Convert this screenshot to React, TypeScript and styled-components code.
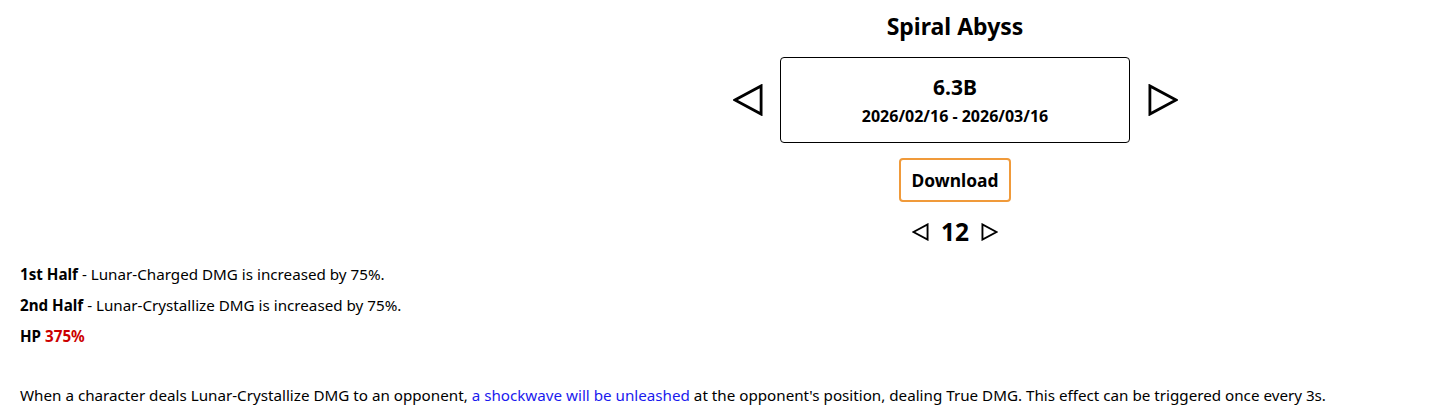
import React from "react";
import styled, { createGlobalStyle } from "styled-components";

const Global = createGlobalStyle`
  body {
    margin: 8px;
    font-family: "Noto Sans", "Open Sans", sans-serif;
    color: #000;
    background: #fff;
  }
`;

const Page = styled.div`
  display: flex;
  flex-direction: column;
`;

const Header = styled.header`
  display: flex;
  justify-content: center;
  padding-left: 474px;
`;

const Column = styled.div`
  display: flex;
  flex-direction: column;
  align-items: center;
`;

const Title = styled.h1`
  margin: 2px 0 0;
  font-size: 23px;
  font-weight: 700;
  line-height: 32px;
`;

const PeriodRow = styled.div`
  display: flex;
  align-items: center;
  gap: 17px;
  margin-top: 15px;
`;

const ArrowButton = styled.button<{ $size: number }>`
  display: flex;
  align-items: center;
  justify-content: center;
  width: ${(p) => p.$size}px;
  height: ${(p) => p.$size}px;
  padding: 0;
  border: none;
  background: none;
  cursor: pointer;
`;

const PeriodBox = styled.div`
  width: 348px;
  height: 84px;
  border: 1px solid #000;
  border-radius: 4px;
  display: flex;
  flex-direction: column;
  align-items: center;
  justify-content: center;
  gap: 6px;
`;

const Version = styled.div`
  font-size: 21px;
  font-weight: 700;
  line-height: 26px;
`;

const Dates = styled.div`
  font-size: 16px;
  font-weight: 700;
  line-height: 20px;
`;

const DownloadButton = styled.button`
  margin-top: 15px;
  height: 44px;
  padding: 0 11px;
  border: 2px solid #f09a3a;
  border-radius: 4px;
  background: #fff;
  font-family: inherit;
  font-size: 17.4px;
  font-weight: 700;
  color: #000;
  cursor: pointer;
`;

const FloorRow = styled.div`
  display: flex;
  align-items: center;
  gap: 12px;
  margin-top: 15px;
`;

const FloorNumber = styled.span`
  font-size: 24.5px;
  font-weight: 700;
  line-height: 30px;
`;

const Details = styled.section`
  padding: 16px 12px 0;
  font-size: 15.2px;
`;

const Line = styled.p`
  margin: 0 0 9px;
  line-height: 22px;
`;

const Strong = styled.b`
  font-weight: 700;
`;

const Red = styled.span`
  color: #cc0000;
  font-weight: 700;
`;

const Effect = styled.p`
  margin: 37px 0 0;
  line-height: 22px;
`;

const Link = styled.span`
  color: #1a1aee;
`;

function Triangle({ dir, w, h, stroke }: { dir: "left" | "right"; w: number; h: number; stroke: number }) {
  const pad = stroke / 2 + 0.5;
  const pts =
    dir === "left"
      ? `${pad},${h / 2} ${w - pad},${pad} ${w - pad},${h - pad}`
      : `${w - pad},${h / 2} ${pad},${pad} ${pad},${h - pad}`;
  return (
    <svg width={w} height={h} viewBox={`0 0 ${w} ${h}`}>
      <polygon points={pts} fill="none" stroke="#000" strokeWidth={stroke} strokeLinejoin="miter" />
    </svg>
  );
}

export default function App() {
  return (
    <Page>
      <Global />
      <Header>
        <Column>
          <Title>Spiral Abyss</Title>
          <PeriodRow>
            <ArrowButton $size={31}>
              <Triangle dir="left" w={30} h={32} stroke={2.8} />
            </ArrowButton>
            <PeriodBox>
              <Version>6.3B</Version>
              <Dates>2026/02/16 - 2026/03/16</Dates>
            </PeriodBox>
            <ArrowButton $size={31}>
              <Triangle dir="right" w={30} h={32} stroke={2.8} />
            </ArrowButton>
          </PeriodRow>
          <DownloadButton>Download</DownloadButton>
          <FloorRow>
            <ArrowButton $size={17}>
              <Triangle dir="left" w={17} h={18} stroke={1.9} />
            </ArrowButton>
            <FloorNumber>12</FloorNumber>
            <ArrowButton $size={17}>
              <Triangle dir="right" w={17} h={18} stroke={1.9} />
            </ArrowButton>
          </FloorRow>
        </Column>
      </Header>
      <Details>
        <Line>
          <Strong>1st Half</Strong> - Lunar-Charged DMG is increased by 75%.
        </Line>
        <Line>
          <Strong>2nd Half</Strong> - Lunar-Crystallize DMG is increased by 75%.
        </Line>
        <Line>
          <Strong>HP</Strong> <Red>375%</Red>
        </Line>
        <Effect>
          When a character deals Lunar-Crystallize DMG to an opponent, <Link>a shockwave will be unleashed</Link> at the
          opponent's position, dealing True DMG. This effect can be triggered once every 3s.
        </Effect>
      </Details>
    </Page>
  );
}
